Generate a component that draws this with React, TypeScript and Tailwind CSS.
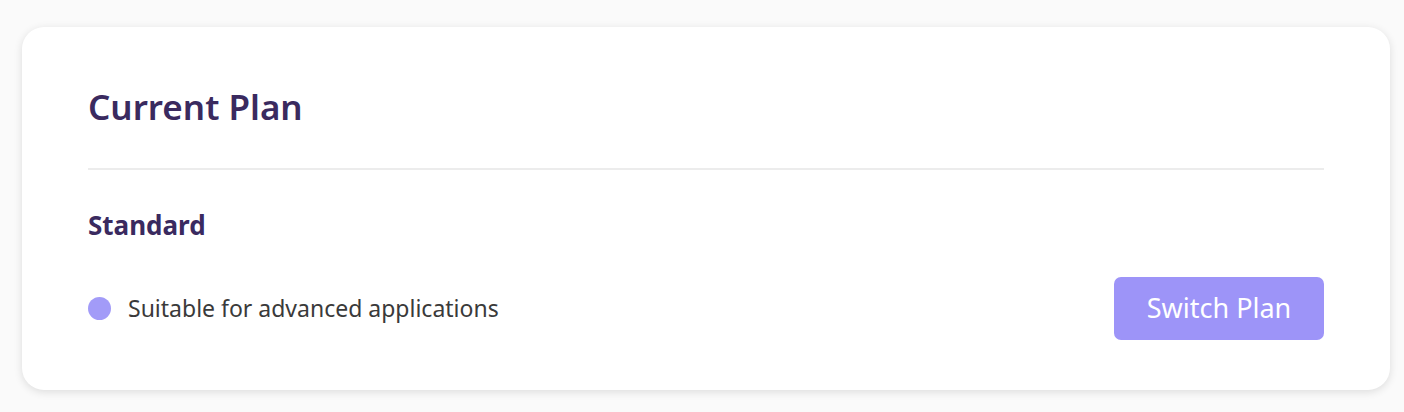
export default function App() {
  return (
    <div className="min-h-screen bg-[#fafafa] pl-[22px] pt-[27px] font-['Noto_Sans',sans-serif]">
      <div className="h-[363px] w-[1368px] rounded-[22px] bg-white px-[66px] pt-[62px] shadow-[0_2px_8px_rgba(0,0,0,0.12)]">
        <h1 className="text-[35px] leading-none font-semibold text-[#3a2a5f]">Current Plan</h1>
        <div className="mt-[44px] h-[2px] bg-[#ececec]" />
        <h2 className="mt-[42px] text-[26px] leading-none font-bold text-[#3a2a5f]">Standard</h2>
        <div className="mt-[39px] flex items-center justify-between">
          <div className="flex items-center gap-[17px]">
            <span className="h-[23px] w-[23px] rounded-full bg-[#a29bf8]" />
            <span className="text-[23px] text-[#3a3a3a]">Suitable for advanced applications</span>
          </div>
          <button className="h-[63px] w-[210px] rounded-[7px] bg-[#9d94f8] text-[27px] text-white">
            Switch Plan
          </button>
        </div>
      </div>
    </div>
  );
}
